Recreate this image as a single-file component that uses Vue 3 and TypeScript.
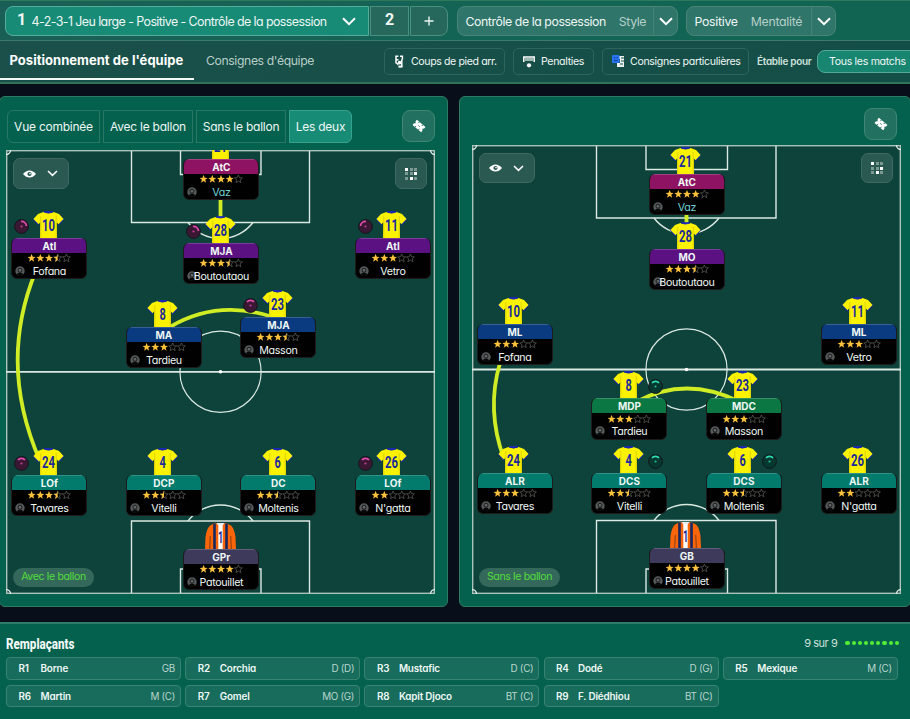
<script setup lang="ts">
type Kit = 'home' | 'keeper'
interface Player {
  x: number
  y: number
  num: string
  role: string
  tone: string
  stars: number
  name: string
  kit?: Kit
  accent?: boolean
  badge?: { side: 'left' | 'right'; turn: number }
}
interface Pitch {
  id: string
  label: string
  w: number
  h: number
  boxTop: number
  half: number
  left: number
  right: number
  innerLeft: number
  innerRight: number
  boxBottom: number
  innerBottom: number
  links: string[]
  players: Player[]
}

const pitches: Pitch[] = [
  {
    id: 'with', label: 'Avec le ballon', w: 429, h: 444,
    boxTop: 72.5, half: 221.8, left: 125.5, right: 303.5, innerLeft: 174.5, innerRight: 255,
    boxBottom: 371, innerBottom: 419,
    links: ['M214.5 46V70', 'M29 123Q-8 215 34 311', 'M164 177Q211 149 267 167'],
    players: [
      { x: 178, y: 9, num: '21', role: 'AtC', tone: 'magenta', stars: 4, name: 'Vaz', accent: true },
      { x: 6, y: 88, num: '10', role: 'AtI', tone: 'purple', stars: 3.5, name: 'Fofana', badge: { side: 'left', turn: 40 } },
      { x: 178, y: 93, num: '28', role: 'MJA', tone: 'purple', stars: 3.5, name: 'Boutoutaou', badge: { side: 'left', turn: 40 } },
      { x: 349.5, y: 88, num: '11', role: 'AtI', tone: 'purple', stars: 3, name: 'Vetro', badge: { side: 'left', turn: -40 } },
      { x: 120.5, y: 177, num: '8', role: 'MA', tone: 'blue', stars: 3, name: 'Tardieu' },
      { x: 235, y: 167, num: '23', role: 'MJA', tone: 'blue', stars: 3.5, name: 'Masson', badge: { side: 'left', turn: 0 } },
      { x: 6, y: 325, num: '24', role: 'LOf', tone: 'teal', stars: 3.5, name: 'Tavares', badge: { side: 'left', turn: 0 } },
      { x: 120.5, y: 325, num: '4', role: 'DCP', tone: 'teal', stars: 2.5, name: 'Vitelli' },
      { x: 235, y: 325, num: '6', role: 'DC', tone: 'teal', stars: 2.5, name: 'Moltenis' },
      { x: 349.5, y: 325, num: '26', role: 'LOf', tone: 'teal', stars: 2, name: "N'gatta", badge: { side: 'left', turn: 0 } },
      { x: 178, y: 399, num: '1', role: 'GPr', tone: 'slate', stars: 4, name: 'Patouillet', kit: 'keeper' },
    ],
  },
  {
    id: 'without', label: 'Sans le ballon', w: 429, h: 449,
    boxTop: 73, half: 224.5, left: 124.5, right: 304, innerLeft: 174, innerRight: 255.5,
    boxBottom: 375.5, innerBottom: 424,
    links: ['M214.5 68V80', 'M28 218Q14 265 32 314', 'M164 257Q214 230 268 257'],
    players: [
      { x: 177.5, y: 29, num: '21', role: 'AtC', tone: 'magenta', stars: 4, name: 'Vaz', accent: true },
      { x: 177.5, y: 104, num: '28', role: 'MO', tone: 'purple', stars: 3.5, name: 'Boutoutaou' },
      { x: 5.5, y: 179, num: '10', role: 'ML', tone: 'blue', stars: 3, name: 'Fofana' },
      { x: 349.5, y: 179, num: '11', role: 'ML', tone: 'blue', stars: 3, name: 'Vetro' },
      { x: 120, y: 253.5, num: '8', role: 'MDP', tone: 'green', stars: 3, name: 'Tardieu', badge: { side: 'right', turn: 0 } },
      { x: 234.5, y: 253.5, num: '23', role: 'MDC', tone: 'green', stars: 3, name: 'Masson' },
      { x: 5.5, y: 328, num: '24', role: 'ALR', tone: 'teal', stars: 3, name: 'Tavares' },
      { x: 120, y: 328, num: '4', role: 'DCS', tone: 'teal', stars: 2.5, name: 'Vitelli', badge: { side: 'right', turn: 0 } },
      { x: 234.5, y: 328, num: '6', role: 'DCS', tone: 'teal', stars: 2.5, name: 'Moltenis', badge: { side: 'right', turn: 0 } },
      { x: 349.5, y: 328, num: '26', role: 'ALR', tone: 'teal', stars: 2, name: "N'gatta" },
      { x: 177.5, y: 403, num: '1', role: 'GB', tone: 'slate', stars: 4, name: 'Patouillet', kit: 'keeper' },
    ],
  },
]

const views = ['Vue combinée', 'Avec le ballon', 'Sans le ballon', 'Les deux']
const subs = [
  ['R1', 'Borne', 'GB'], ['R2', 'Corchia', 'D (D)'], ['R3', 'Mustafic', 'D (C)'], ['R4', 'Dodé', 'D (G)'], ['R5', 'Mexique', 'M (C)'],
  ['R6', 'Martin', 'M (C)'], ['R7', 'Gomel', 'MO (G)'], ['R8', 'Kapit Djoco', 'BT (C)'], ['R9', 'F. Diédhiou', 'BT (C)'],
]
const star = 'M4 -.1 5.1 2.7 8 2.9 5.7 4.8 6.5 7.7 4 6.1 1.5 7.7 2.3 4.8 0 2.9 2.9 2.7Z'
const halfStar = 'M4 -.1V6.1L1.5 7.7 2.3 4.8 0 2.9 2.9 2.7Z'
const gridOn = [0, 5, 7]
</script>

<template>
  <div class="screen">
    <header class="top">
      <div class="tactics">
        <div class="slot current"><b class="idx">1</b><span class="t-tactic">4-2-3-1 Jeu large - Positive - Contrôle de la possession</span>
          <svg class="chev" width="14" height="9" viewBox="0 0 14 9"><path d="M1 1.2 7 7.2 13 1.2" /></svg>
        </div>
        <div class="slot second"><b class="idx">2</b></div>
        <div class="slot add"><svg width="10" height="10" viewBox="0 0 10 10"><path d="M5 .5V9.5M.5 5H9.5" stroke="#e9f5f1" stroke-width="1.4" /></svg></div>
      </div>
      <div class="drop style"><span>Contrôle de la possession</span><span class="dim">Style</span>
        <i><svg class="chev" width="14" height="9" viewBox="0 0 14 9"><path d="M1 1.2 7 7.2 13 1.2" /></svg></i>
      </div>
      <div class="drop mental"><span>Positive</span><span class="dim">Mentalité</span>
        <i><svg class="chev" width="14" height="9" viewBox="0 0 14 9"><path d="M1 1.2 7 7.2 13 1.2" /></svg></i>
      </div>
    </header>

    <nav class="sub">
      <div class="tab on">Positionnement de l'équipe</div>
      <div class="tab">Consignes d'équipe</div>
      <div class="tools">
        <button class="b1">
          <svg width="9" height="13" viewBox="0 0 9 13"><path d="M1 .5V8.5M1 1.2H3.4M5 1.2H7.4V4.4M1.5 4.8H3.5M6.8 4.4V12M1.5 8 3.4 9.6" fill="none" stroke="#fff" stroke-width="1.5" /><circle cx="4.7" cy="7.6" r="1.9" fill="#fff" /><path d="M3.4 10.6H7.4V12.6H3.4Z" fill="#fff" /></svg>
          <span>Coups de pied arr.</span>
        </button>
        <button class="b2">
          <svg width="12" height="12" viewBox="0 0 12 12"><path d="M.8 6V1H11.2V6" fill="none" stroke="#fff" stroke-width="1.5" /><path d="M2 2H10V5H2Z" fill="#9db9b1" /><circle cx="6" cy="9.3" r="2.1" fill="#fff" /></svg>
          <span>Penalties</span>
        </button>
        <button class="b3">
          <svg width="13" height="13" viewBox="0 0 13 13"><path d="M6 1H12V12H5V8H8V4H6Z" fill="#e8f1ee" /><path d="M9 3H12M9 6H12M8 9H11" stroke="#18504a" stroke-width="1" /><rect width="7.5" height="8" rx="1" fill="#2674f0" /><path d="M1.8 3H3.2M4.5 3H5.8M2 5.6H5.5" stroke="#123c92" stroke-width="1" /></svg>
          <span>Consignes particulières</span>
        </button>
      </div>
      <b class="made">Établie pour</b>
      <button class="matches">Tous les matchs</button>
    </nav>

    <main class="board">
      <section v-for="p in pitches" :key="p.id" class="panel" :class="p.id">
        <div class="bar">
          <div v-if="p.id === 'with'" class="views">
            <button v-for="(v, i) in views" :key="v" :class="['v' + i, { on: i === 3 }]">{{ v }}</button>
          </div>
          <button class="icon">
            <svg width="14" height="14" viewBox="0 0 14 14"><g transform="translate(7 7) rotate(40) scale(.88) translate(-7 -7)"><path d="M.6 3.2H13.4V5.4L12 7 13.4 8.6V10.8H.6V8.6L2 7 .6 5.4Z" fill="#fff" /><path d="M4.4 3V5M9.4 3V5M4.4 9V11M9.4 9V11M6 7H8" stroke="#22705f" stroke-width="1" /></g></svg>
          </button>
        </div>
        <div class="pitch">
          <svg class="field" :width="p.w" :height="p.h" :viewBox="`0 0 ${p.w} ${p.h}`">
            <g fill="none" stroke="#dbe9e4" stroke-width="1.4">
              <rect x=".7" y=".7" :width="p.w - 1.4" :height="p.h - 1.4" stroke="#a9c3bb" />
              <path :d="`M${p.left} 1V${p.boxTop}H${p.right}V1M${p.innerLeft} 1V24.5H${p.innerRight}V1`" />
              <path :d="`M${p.left} ${p.h - 1}V${p.boxBottom}H${p.right}V${p.h - 1}M${p.innerLeft} ${p.h - 1}V${p.innerBottom}H${p.innerRight}V${p.h - 1}`" />
              <path :d="`M182 ${p.boxTop}A41 41 0 0 0 247 ${p.boxTop}`" />
              <path :d="`M182 ${p.boxBottom}A41 41 0 0 1 247 ${p.boxBottom}`" />
              <path :d="`M0 ${p.half}H${p.w}`" stroke-width="1.8" />
              <circle cx="214.5" :cy="p.half" r="40.6" stroke-width="1.2" />
              <path :d="`M0 4.5A4.5 4.5 0 0 0 4.5 0M${p.w - 4.5} 0A4.5 4.5 0 0 0 ${p.w} 4.5M0 ${p.h - 4.5}A4.5 4.5 0 0 1 4.5 ${p.h}M${p.w - 4.5} ${p.h}A4.5 4.5 0 0 1 ${p.w} ${p.h - 4.5}`" />
            </g>
            <circle cx="214.5" :cy="p.half" r="1.8" fill="#fff" />
            <path v-for="l in p.links" :key="l" :d="l" fill="none" stroke="#cfec24" stroke-width="3.8" />
          </svg>

          <div v-for="c in p.players" :key="c.name" class="player" :style="{ left: c.x - 0.6 + 'px', top: c.y - 27.4 + 'px' }">
            <svg v-if="c.kit === 'keeper'" class="shirt" width="31" height="27" viewBox="0 0 31 27">
              <path d="M10 1 5 3.5Q1.5 7 .5 15L0 27H31L30.5 15Q29.5 7 26 3.5L21 1Q15.5 3 10 1Z" fill="#f9650b" />
              <path d="M5.3 14 4.6 27M25.7 14 26.4 27" stroke="#9b4310" stroke-width="1.2" />
              <path d="M9.5 1.5V27M21.5 1.5V27" stroke="#17275f" stroke-width="2.6" />
              <path d="M15.5 1.5V27" stroke="#fff" stroke-width="4.4" /><path d="M11.4 1H19.6L18 3H13Z" fill="#e9edf7" />
              <text x="12.9" y="20.5" textLength="5.2" lengthAdjust="spacingAndGlyphs">1</text>
            </svg>
            <svg v-else class="shirt" width="31" height="27" viewBox="0 0 31 27">
              <path d="M0 8.2 1.2 7 6.2 12.6 5 14.2ZM31 8.2 29.8 7 24.8 12.6 26 14.2Z" fill="#1720c4" />
              <path d="M10.5 1 5 3 .4 8 5.6 13.2 7.2 11.2 7 27H24L23.8 11.2 25.4 13.2 30.6 8 26 3 20.5 1Q15.5 3.4 10.5 1Z" fill="#fbf203" />
              <path d="M11 1Q15.5 3.2 20 1L19.2.4H11.8Z" fill="#1c27b8" stroke="#1c27b8" stroke-width=".8" />
              <path d="M7.8 5V27M23.2 5V27" stroke="#d8ca00" stroke-width=".8" />
              <text :x="c.num.length > 1 ? 9 : 12.4" y="20.3" :textLength="c.num.length > 1 ? 13 : 6.3" lengthAdjust="spacingAndGlyphs">{{ c.num }}</text>
            </svg>
            <svg v-if="c.badge" :class="['badge', c.badge.side]" width="15" height="15" viewBox="0 0 15 15">
              <circle cx="7.5" cy="7.5" r="6.9" :fill="c.badge.side === 'left' ? '#3a1833' : '#063830'" stroke="#14161c" stroke-width="1" />
              <circle cx="7.5" cy="7.5" r="1.1" :fill="c.badge.side === 'left' ? '#c33b96' : '#22b993'" />
              <path d="M4 3.9A5 5 0 0 1 11 3.9" :transform="`rotate(${c.badge.turn} 7.5 7.5)`" fill="none" :stroke="c.badge.side === 'left' ? '#e44db2' : '#2ce0b4'" stroke-width="1.8" />
            </svg>
            <div class="card">
              <div class="role" :class="c.tone">{{ c.role }}</div>
              <svg class="stars" width="44" height="8" viewBox="0 0 44 8">
                <g v-for="n in 5" :key="n" :transform="`translate(${(n - 1) * 8.7 + 0.6} 0)`">
                  <path v-if="n <= c.stars" :d="star" fill="#fcc23c" />
                  <path v-else :d="star" fill="none" stroke="#62625f" stroke-width=".7" />
                  <path v-if="n - 0.5 === c.stars" :d="halfStar" fill="#fcc23c" />
                </g>
              </svg>
              <svg class="face" width="10" height="10" viewBox="0 0 10 10"><circle cx="5" cy="5" r="4.7" fill="#555a5b" /><path d="M1.8 10Q2 6.6 5 6.6T8.2 10Z" fill="#090909" /><circle cx="5" cy="4.2" r="2" fill="#606566" stroke="#0b0b0b" stroke-width=".8" /></svg>
              <div class="name" :class="{ accent: c.accent }">{{ c.name }}</div>
            </div>
          </div>

          <div class="glass eye">
            <svg width="13" height="8" viewBox="0 0 13 8"><path d="M0 4Q3 .4 6.5 .4T13 4Q10 7.6 6.5 7.6T0 4Z" fill="#fff" /><circle cx="6.5" cy="4" r="2.1" fill="#28564f" /><circle cx="7" cy="3.6" r=".8" fill="#fff" /></svg>
            <svg width="11" height="7" viewBox="0 0 11 7"><path d="M1 1 5.5 5.4 10 1" fill="none" stroke="#fff" stroke-width="1.5" /></svg>
          </div>
          <div class="glass grid">
            <span v-for="n in 9" :key="n" :class="{ lit: gridOn.includes(n - 1) }" />
          </div>
          <div class="phase">{{ p.label }}</div>
        </div>
      </section>
    </main>

    <section class="bench">
      <div class="head">
        <svg class="ttl" width="72" height="20" viewBox="0 0 72 20"><text x="0" y="14" textLength="68.5" lengthAdjust="spacingAndGlyphs" class="title">Remplaçants</text></svg>
        <div class="count"><span>9 sur 9</span><div class="dots"><i v-for="n in 9" :key="n" /></div></div>
      </div>
      <div class="subs">
        <div v-for="s in subs" :key="s[0]" class="subrow"><b class="no">{{ s[0] }}</b><b>{{ s[1] }}</b><span>{{ s[2] }}</span></div>
      </div>
    </section>
  </div>
</template>

<style>
body { background: #090e1b; overflow: hidden; }
</style>

<style scoped>
* { box-sizing: border-box; }
.screen {
  width: 910px; height: 719px; overflow: hidden; display: flex; flex-direction: column;
  background: #090e1b; color: #eef7f4;
  font-family: Inter, "Liberation Sans", sans-serif; font-feature-settings: "cv11" 1;
  white-space: nowrap;
}
svg { flex: none; }
button { font: inherit; font-feature-settings: inherit; color: inherit; background: none; padding: 0; margin: 0; white-space: nowrap; }
.top {
  height: 41px; flex: none; display: flex; align-items: flex-start; gap: 8px; padding: 5px 0 0 5px;
  background: linear-gradient(90deg, #1a5f55, #136556 60%, #106451); border-top: 1px solid #2e795b; border-bottom: 1px solid #3c7b6c;
}
.tactics { display: flex; gap: 1px; width: 444px; flex: none; }
.slot { height: 30px; border: 1px solid #4b8f80; background: #27685d; display: flex; align-items: center; justify-content: center; }
.current { width: 364px; justify-content: flex-start; background: #188b77; border-color: #55ac9a; border-radius: 8px 0 0 8px; padding-left: 11px; padding-right: 12px; }
.current .idx { width: 14.5px; }
.current .chev { margin-left: auto; }
.second { width: 39px; }
.add { width: 38px; border-radius: 0 8px 8px 0; }
.idx { font-family: Roboto, sans-serif; font-size: 16px; line-height: 28px; padding-bottom: 2px; }
.t-tactic { font-size: 12.4px; letter-spacing: -.56px; }
.chev path { fill: none; stroke: #fff; stroke-width: 2; }
.drop { height: 30px; border: 1px solid #498476; border-radius: 8px; background: #30756a; display: flex; align-items: center; padding-left: 7.5px; font-size: 12.3px; letter-spacing: -.42px; }
.drop .dim { color: #b5d0c9; margin-left: 13px; }
.drop i { margin-left: auto; width: 24px; height: 28px; border-left: 1px solid #438175; display: flex; align-items: center; justify-content: center; }
.style { width: 221px; }
.mental { width: 150px; letter-spacing: -.28px; }
.sub {
  height: 43px; flex: none; display: flex; align-items: flex-start; position: relative;
  background: linear-gradient(90deg, #1b504a, #134e47); border-bottom: 2px solid #2f7459;
}
.tab { flex: none; height: 39px; line-height: 39px; font-size: 12.2px; color: #b7cec8; letter-spacing: -.37px; padding-left: 12px; width: 190px; }
.tab.on { font-weight: 700; font-size: 13px; color: #fff; width: 194px; padding-left: 9.5px; border-bottom: 2px solid #f1f8f6; letter-spacing: .03px; }
.tools { display: flex; gap: 8px; padding-top: 7px; flex: none; }
.tools button { flex: none; height: 27px; border: 1px solid #2b655b; border-radius: 5px; display: flex; align-items: center; justify-content: flex-start; font-size: 10.6px; letter-spacing: -.34px; }
.tools .b1 { width: 121px; padding-left: 10px; gap: 7px; letter-spacing: -.4px; }
.b2 { width: 81px; padding-left: 9px; gap: 6px; }
.b3 { width: 147px; padding-left: 9px; gap: 5px; }
.made { flex: none; font-size: 10px; line-height: 41px; width: 60px; margin-left: 8px; letter-spacing: -.3px; color: #cfe2dc; font-weight: 600; }
.matches { flex: none; margin-top: 9px; width: 110px; height: 23px; border: 1px solid #51a997; border-radius: 8px 0 0 8px; background: #188571; font-size: 10.6px; letter-spacing: -.32px; text-align: left; padding-left: 11px; }
.board { display: flex; gap: 11px; margin: 12px -1px 0; height: 511px; flex: none; }
.panel { height: 511px; width: 449px; flex: none; border: 1px solid #2f7b62; border-radius: 6px; background: #04614e; padding: 0 0 0 6px; }
.panel.without { width: 452px; padding-left: 12px; }
.bar { height: 53px; display: flex; align-items: flex-start; padding-top: 13px; width: 429px; }
.without .bar { height: 48px; padding-top: 11px; width: 425px; }
.views { display: flex; gap: 3px; padding-left: 1px; }
.views button { height: 33px; border: 1px solid #2a7664; font-size: 12px; letter-spacing: -.24px; }
.views .v0 { width: 93px; border-radius: 6px 0 0 6px; }
.views .v1, .views .v2 { width: 90px; }
.views .v3 { width: 63px; border-radius: 0 6px 6px 0; }
.views .on { background: #188b76; border-color: #38a18d; }
.icon { width: 33px; height: 32px; border: 1px solid #3f8674; border-radius: 8px; background: #22705f; margin-left: auto; display: flex; align-items: center; justify-content: center; }
.pitch { width: 429px; height: 444px; position: relative; overflow: hidden; background: #0d433a; }
.without .pitch { height: 449px; }
.field { display: block; }
.player { position: absolute; width: 76px; height: 69px; }
.shirt { position: absolute; left: 21.5px; top: 0; }
.shirt text { font: 700 16px Roboto, sans-serif; fill: #1a2a9c; }
.badge { position: absolute; top: 8px; left: 3px; }
.badge.right { left: 56.5px; }
.card { position: absolute; top: 27px; left: 0; width: 76px; height: 41.5px; background: #010101; border: 1px solid #1c1c1d; border-top: 0; border-radius: 6px; overflow: hidden; display: flex; flex-direction: column; align-items: center; }
.role { width: 76px; height: 15px; flex: none; line-height: 14.5px; font-size: 10px; font-weight: 700; text-align: center; border-top: 1px solid #ffffff30; border-radius: 5px 5px 0 0; }
.magenta { background: #8e1463; }
.purple { background: #5c1183; }
.blue { background: #0a3a80; }
.teal { background: #027a6c; }
.green { background: #0b7742; }
.slate { background: #3d3a5b; }
.stars { margin-top: 1.7px; flex: none; }
.face { position: absolute; left: 3px; top: 28px; }
.name { position: relative; font-size: 10.7px; line-height: 15px; margin-top: 1.7px; letter-spacing: -.33px; }
.name.accent { color: #72d3d6; }
.glass { position: absolute; top: 8px; height: 31px; border: 1px solid #41695f; border-radius: 7px; background: #295951; }
.without .glass { height: 30px; }
.eye { left: 7px; width: 56px; display: flex; align-items: center; justify-content: space-between; padding: 0 10px 0 9px; }
.grid { left: 389px; width: 32px; display: grid; grid-template-columns: repeat(3, 3px); grid-auto-rows: 3px; gap: 1.5px; align-content: center; justify-content: center; }
.grid span { background: #7c9a93; }
.grid .lit { background: #fff; }
.phase { position: absolute; left: 7px; bottom: 7.5px; width: 81px; height: 19px; border-radius: 10px; background: #33685a; color: #54dc3a; font-size: 10.6px; line-height: 18px; text-align: center; letter-spacing: -.38px; }
.bench { margin-top: 15px; height: 98px; flex: none; background: #04614e; border-top: 2px solid #2e7b69; padding: 10.5px 13px 0 6px; }
.head { height: 22.5px; display: flex; justify-content: space-between; }
.ttl { overflow: visible; }
.title { font: 800 14.5px Roboto, sans-serif; fill: #f3faf7; }
.count { display: flex; gap: 8px; align-items: center; font-size: 11px; letter-spacing: -.45px; height: 17px; margin-right: -2px; color: #cce0da; }
.dots { display: flex; gap: 2px; }
.dots i { width: 4.2px; height: 4.2px; border-radius: 50%; background: #52ee36; }
.subs { display: grid; grid-template-columns: repeat(5, 175px); gap: 5px 4.2px; }
.subrow { height: 22.5px; border: 1px solid #3a8371; border-radius: 4px; background: #176c5c; display: flex; align-items: center; font-size: 9.9px; letter-spacing: -.17px; padding: 0 5px 0 11.5px; }
.subrow .no { width: 22px; }
.subrow b { font-weight: 600; }
.subrow span { margin-left: auto; color: #b9d5cd; letter-spacing: -.3px; }
</style>
